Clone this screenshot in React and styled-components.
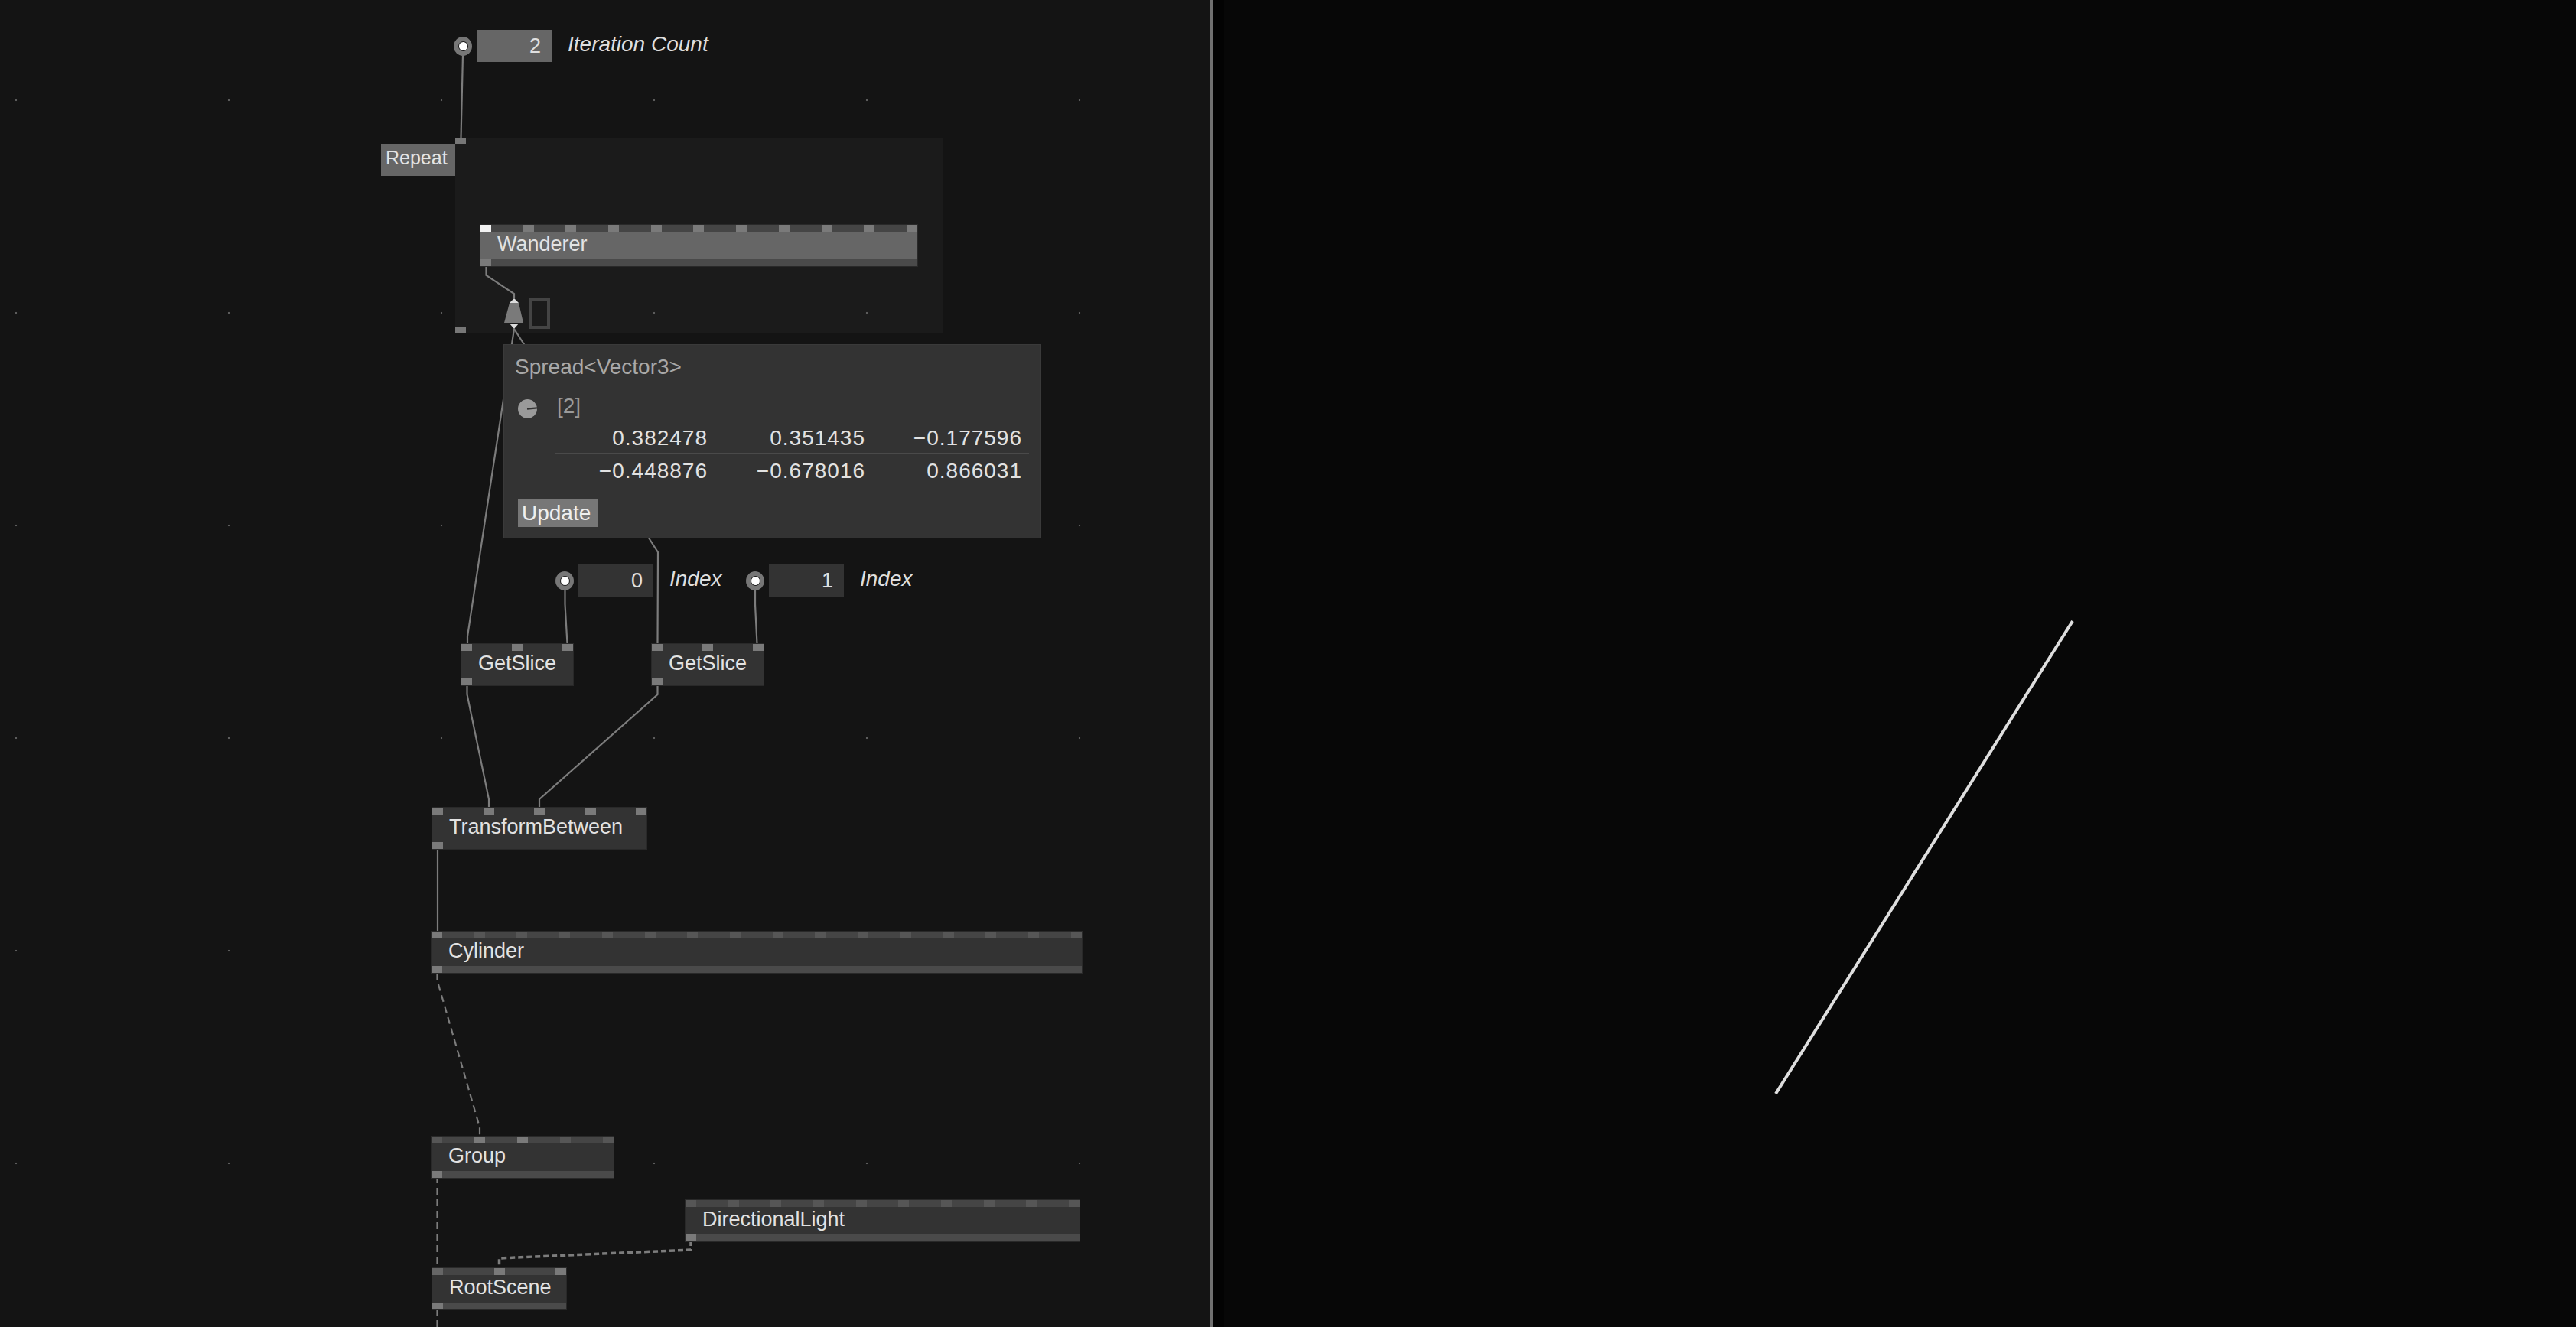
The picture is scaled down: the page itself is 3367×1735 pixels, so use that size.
import React from 'react';
import styled, { createGlobalStyle } from 'styled-components';

const GlobalStyle = createGlobalStyle`
  html, body {
    margin: 0;
    padding: 0;
    background: #070707;
  }
  body {
    font-family: 'Liberation Sans', Arial, sans-serif;
    overflow: hidden;
  }
`;

const pinColors = {
  w: '#f2f2f2',
  o: '#7a7a7a',
  m: '#666666',
  d: '#565656',
};

// patch content: canvas coordinates are the content here
const nodes = [
  { label: 'Wanderer', x: 628, y: 294, w: 571, tone: 'selected', pins: 'w' + 'o'.repeat(10) },
  { label: 'GetSlice', x: 603, y: 842, w: 146, tone: 'flat', pins: 'ooo' },
  { label: 'GetSlice', x: 852, y: 842, w: 146, tone: 'flat', pins: 'ooo' },
  { label: 'TransformBetween', x: 565, y: 1056, w: 280, tone: 'flat', pins: 'ooooo' },
  { label: 'Cylinder', x: 564, y: 1218, w: 850, tone: 'plain', pins: 'o' + 'd'.repeat(15) },
  { label: 'Group', x: 564, y: 1486, w: 238, tone: 'plain', pins: 'doodd' },
  { label: 'DirectionalLight', x: 896, y: 1569, w: 515, tone: 'plain', pins: 'd'.repeat(10) },
  { label: 'RootScene', x: 565, y: 1658, w: 175, tone: 'plain', pins: 'moo' },
];

const ioBoxes = [
  { x: 593, y: 39, value: '2', label: 'Iteration Count', selected: true },
  { x: 726, y: 738, value: '0', label: 'Index' },
  { x: 975, y: 738, value: '1', label: 'Index' },
];

const wires = [
  { d: 'M605 71 L602.5 180' },
  { d: 'M635.5 347 V360 L672 384 V390' },
  { d: 'M672 430 L611 832 V842' },
  { d: 'M672 430 L860 722 L859.5 842' },
  { d: 'M738.5 771 V790 L741.5 842' },
  { d: 'M987 771 V790 L989.5 842' },
  { d: 'M610.5 896 V908 L639 1045 V1056' },
  { d: 'M859.5 896 V908 L705 1045 V1056' },
  { d: 'M572 1109 V1218' },
  { d: 'M634 1490 H676' },
  { d: 'M579 1662 H646' },
  { d: 'M571.5 1272 V1282 L627 1474 V1486', dashed: true },
  { d: 'M571.5 1538 V1658', dashed: true },
  { d: 'M903 1622 V1634 L652.5 1645 V1658', dashed: true, heavy: true },
  { d: 'M571.5 1711 V1735', dashed: true },
];

const spread = [
  ['0.382478', '0.351435', '\u22120.177596'],
  ['\u22120.448876', '\u22120.678016', '0.866031'],
];

const Screen = styled.div`
  display: flex;
  width: 3367px;
  height: 1735px;
  overflow: hidden;
`;

const Patch = styled.div`
  position: relative;
  flex: 0 0 1581px;
  height: 100%;
  background: #141414;
  overflow: hidden;
`;

const Splitter = styled.div`
  flex: 0 0 4px;
  background: #707070;
`;

const Renderer = styled.div`
  position: relative;
  flex: 1;
  background: linear-gradient(to right, #030303 15px, #070707 15px);
`;

const RenderSurface = styled.svg`
  position: absolute;
  inset: 0;
  width: 100%;
  height: 100%;
`;

const DotGrid = styled.div`
  position: absolute;
  inset: 0;
  pointer-events: none;
  background-image: radial-gradient(circle, #5c5c5c 0 1px, transparent 1.6px);
  background-size: 278px 278px;
  background-position: -118px -8px;
`;

const Region = styled.div`
  position: absolute;
  left: 595px;
  top: 180px;
  width: 637px;
  height: 256px;
  background: #1b1b1b;
  display: flex;
  flex-direction: column;
  justify-content: space-between;
  align-items: flex-start;
`;

const RegionPin = styled.span`
  width: 14px;
  height: 8px;
  background: #777;
`;

const RegionLabel = styled.div`
  position: absolute;
  left: 498px;
  top: 188px;
  width: 97px;
  height: 42px;
  box-sizing: border-box;
  padding: 0 0 0 6px;
  background: #666;
  color: #e4e4e4;
  font-size: 25px;
  line-height: 37px;
  white-space: nowrap;
`;

const WireLayer = styled.svg`
  position: absolute;
  left: 0;
  top: 0;
  pointer-events: none;
`;

const NodeBox = styled.div`
  position: absolute;
  left: ${(p) => p.$x}px;
  top: ${(p) => p.$y}px;
  width: ${(p) => p.$w}px;
  display: flex;
  flex-direction: column;
  background: ${(p) => (p.$tone === 'selected' ? '#666' : '#333')};
  box-shadow: 0 0 0 1px #292929;
`;

const PinStrip = styled.div`
  height: 9px;
  display: flex;
  justify-content: space-between;
  background: ${(p) => {
    if (p.$tone === 'flat') return 'transparent';
    return p.$bottom ? '#4a4a4a' : '#454545';
  }};
`;

const Pin = styled.span`
  width: 14px;
  height: 100%;
  background: ${(p) => pinColors[p.$state]};
`;

const NodeLabel = styled.div`
  height: 36px;
  line-height: 32px;
  padding-left: 22px;
  font-size: 27px;
  color: #e2e2e2;
  white-space: nowrap;
`;

const IORow = styled.div`
  position: absolute;
  left: ${(p) => p.$x}px;
  top: ${(p) => p.$y}px;
  display: flex;
  align-items: center;
`;

const IOPin = styled.span`
  width: 24px;
  height: 25px;
  border-radius: 50%;
  background: #777;
  display: flex;
  align-items: center;
  justify-content: center;
  margin-right: 6px;
  &::after {
    content: '';
    width: 11px;
    height: 11px;
    border-radius: 50%;
    background: #fff;
    box-shadow: 0 0 0 1px #1a1a1a;
  }
`;

const ValueField = styled.span`
  width: 98px;
  height: 42px;
  box-sizing: border-box;
  padding-right: 14px;
  background: ${(p) => (p.$selected ? '#666' : '#333')};
  color: #e0e0e0;
  font-size: 27px;
  line-height: 42px;
  text-align: right;
`;

const IOLabel = styled.span`
  margin-left: 21px;
  padding-bottom: 4px;
  font-size: 28px;
  font-style: italic;
  color: #dedede;
  white-space: nowrap;
`;

const PreviewRow = styled.div`
  position: absolute;
  left: 659px;
  top: 389px;
  display: flex;
  gap: 6px;
`;

const PreviewFrame = styled.span`
  width: 28px;
  height: 41px;
  box-sizing: border-box;
  border: 4px solid #444;
`;

const Tooltip = styled.div`
  position: absolute;
  left: 659px;
  top: 451px;
  width: 701px;
  height: 252px;
  box-sizing: border-box;
  padding-top: 13px;
  background: #333;
  outline: 1px solid #3a3a3a;
  font-size: 28px;
  line-height: 32px;
  display: flex;
  flex-direction: column;
  align-items: flex-start;
`;

const TooltipTitle = styled.div`
  padding-left: 14px;
  color: #a8a8a8;
`;

const CountRow = styled.div`
  margin-top: 19px;
  padding-left: 18px;
  display: flex;
  align-items: center;
  gap: 26px;
  color: #9a9a9a;
  svg {
    margin-top: 6px;
  }
`;

const ValueTable = styled.div`
  margin: 10px 0 0 67px;
  width: 619px;
  box-sizing: border-box;
  padding-right: 9px;
`;

const ValueRow = styled.div`
  display: grid;
  grid-template-columns: 199px 206px 1fr;
  color: #e2e2e2;
  letter-spacing: 1px;
  text-align: right;
  ${(p) =>
    p.$first
      ? 'padding-bottom: 3px; border-bottom: 2px solid #4a4a4a; margin-right: -9px; padding-right: 9px;'
      : 'margin-top: 6px;'}
`;

const UpdateButton = styled.div`
  margin: 21px 0 0 18px;
  width: 105px;
  height: 36px;
  box-sizing: border-box;
  padding-left: 5px;
  background: #777;
  color: #efefef;
  line-height: 36px;
`;

function Node({ node }) {
  const pins = node.pins.split('');
  return (
    <NodeBox $x={node.x} $y={node.y} $w={node.w} $tone={node.tone}>
      <PinStrip $tone={node.tone}>
        {pins.map((s, i) => (
          <Pin key={i} $state={s} />
        ))}
      </PinStrip>
      <NodeLabel>{node.label}</NodeLabel>
      <PinStrip $tone={node.tone} $bottom>
        <Pin $state="o" />
      </PinStrip>
    </NodeBox>
  );
}

function IOBox({ box }) {
  return (
    <IORow $x={box.x} $y={box.y}>
      <IOPin />
      <ValueField $selected={box.selected}>{box.value}</ValueField>
      <IOLabel>{box.label}</IOLabel>
    </IORow>
  );
}

function SpreadPinIcon() {
  return (
    <svg width="26" height="42" viewBox="0 0 26 42">
      <polygon points="13,1 7,7 19,7" fill="#dcdcdc" />
      <polygon points="7,7 19,7 25,33 0,33" fill="#7a7a7a" />
      <polygon points="7,34 19,34 13,41" fill="#dcdcdc" />
    </svg>
  );
}

function PieIcon() {
  return (
    <svg width="25" height="25" viewBox="0 0 25 25">
      <circle cx="12.5" cy="12.5" r="12.5" fill="#9a9a9a" />
      <path d="M12 12.6 L25 11.4" stroke="#333" strokeWidth="2.4" />
    </svg>
  );
}

export default function App() {
  return (
    <>
      <GlobalStyle />
      <Screen>
        <Patch>
          <Region>
            <RegionPin />
            <RegionPin />
          </Region>
          <DotGrid />
          <RegionLabel>Repeat</RegionLabel>
          <WireLayer width="1581" height="1735" viewBox="0 0 1581 1735">
            {wires.map((w, i) => (
              <path
                key={i}
                d={w.d}
                fill="none"
                stroke="#7c7c7c"
                strokeWidth={w.heavy ? 3.5 : 2.2}
                strokeDasharray={w.dashed ? (w.heavy ? '7 4' : '9 6') : undefined}
              />
            ))}
          </WireLayer>
          {ioBoxes.map((b, i) => (
            <IOBox key={i} box={b} />
          ))}
          {nodes.map((n, i) => (
            <Node key={i} node={n} />
          ))}
          <PreviewRow>
            <SpreadPinIcon />
            <PreviewFrame />
          </PreviewRow>
          <Tooltip>
            <TooltipTitle>Spread&lt;Vector3&gt;</TooltipTitle>
            <CountRow>
              <PieIcon />
              <span>[2]</span>
            </CountRow>
            <ValueTable>
              {spread.map((row, i) => (
                <ValueRow key={i} $first={i === 0}>
                  {row.map((v, j) => (
                    <span key={j}>{v}</span>
                  ))}
                </ValueRow>
              ))}
            </ValueTable>
            <UpdateButton>Update</UpdateButton>
          </Tooltip>
        </Patch>
        <Splitter />
        <Renderer>
          <RenderSurface>
            <line x1="736" y1="1430" x2="1124" y2="812" stroke="#dedede" strokeWidth="4" />
          </RenderSurface>
        </Renderer>
      </Screen>
    </>
  );
}
